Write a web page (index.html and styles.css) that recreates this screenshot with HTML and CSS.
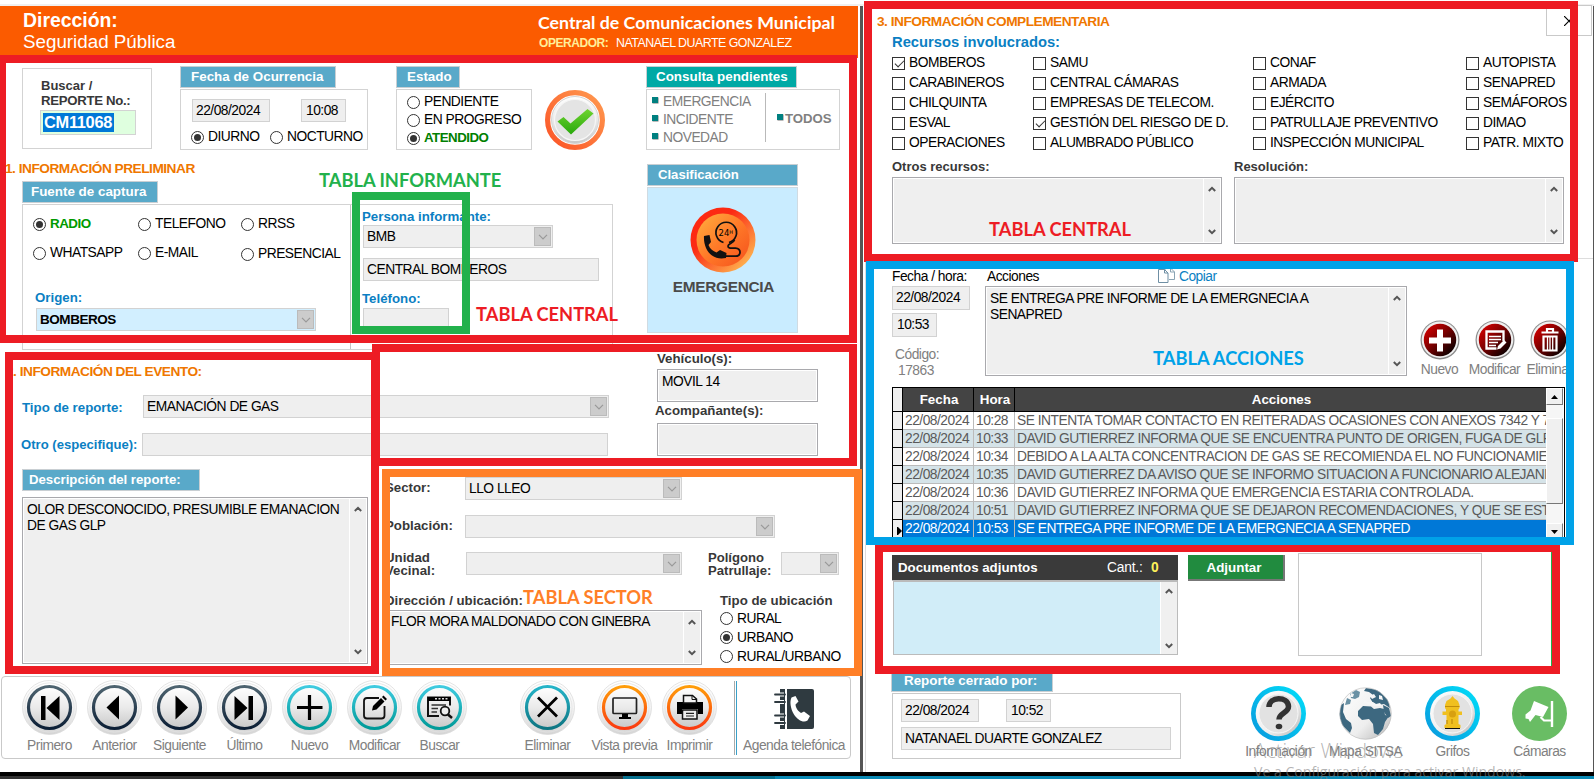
FILE: index.html
```html
<!DOCTYPE html>
<html lang="es">
<head>
<meta charset="utf-8">
<title>Central de Comunicaciones Municipal</title>
<link rel="stylesheet" href="styles.css">
</head>
<body>
<svg class="defs" width="0" height="0" aria-hidden="true">
  <defs>
    <linearGradient id="silver" x1="0" y1="0" x2="0" y2="1"><stop offset="0" stop-color="#ffffff"/><stop offset=".5" stop-color="#eaeaea"/><stop offset="1" stop-color="#c8c8c8"/></linearGradient>
    <linearGradient id="rim" x1="0" y1="0" x2="0" y2="1"><stop offset="0" stop-color="#ffffff"/><stop offset=".5" stop-color="#f4f4f4"/><stop offset="1" stop-color="#d4d4d4"/></linearGradient>
    <linearGradient id="navy" x1="0" y1="0" x2="0" y2="1"><stop offset="0" stop-color="#4e6470"/><stop offset="1" stop-color="#0c1f36"/></linearGradient>
    <linearGradient id="teal" x1="0" y1="0" x2="0" y2="1"><stop offset="0" stop-color="#3fcbe0"/><stop offset="1" stop-color="#009a98"/></linearGradient>
    <linearGradient id="steel" x1="0" y1="0" x2="0" y2="1"><stop offset="0" stop-color="#25b4c8"/><stop offset="1" stop-color="#0d7582"/></linearGradient>
    <linearGradient id="fire" x1="0" y1="0" x2="0" y2="1"><stop offset="0" stop-color="#ff9d0a"/><stop offset="1" stop-color="#fb3a10"/></linearGradient>
    <linearGradient id="coral" x1="1" y1="0" x2="0" y2="1"><stop offset="0" stop-color="#ff9a50"/><stop offset="1" stop-color="#fb5326"/></linearGradient>
    <linearGradient id="leaf" x1="0" y1="0" x2="0" y2="1"><stop offset="0" stop-color="#6fd430"/><stop offset="1" stop-color="#28a80c"/></linearGradient>
    <linearGradient id="cyan" x1="1" y1="0" x2="0" y2="1"><stop offset="0" stop-color="#00e0fa"/><stop offset="1" stop-color="#0a96dc"/></linearGradient>
    <linearGradient id="blood" x1="0" y1="0" x2="1" y2="1"><stop offset="0" stop-color="#e80000"/><stop offset=".4" stop-color="#8a0000"/><stop offset=".85" stop-color="#120000"/></linearGradient>
    <linearGradient id="lava" x1="0" y1="0" x2="1" y2="1"><stop offset="0" stop-color="#ff2a10"/><stop offset=".35" stop-color="#fb2a14"/><stop offset="1" stop-color="#ffd25c"/></linearGradient>
    <linearGradient id="lava2" x1="0" y1="0" x2="1" y2="1"><stop offset="0" stop-color="#ffb040"/><stop offset=".5" stop-color="#ff7a28"/><stop offset="1" stop-color="#f4501c"/></linearGradient>
    <linearGradient id="globe" x1="0" y1="0" x2="1" y2="1"><stop offset="0" stop-color="#ffffff"/><stop offset=".6" stop-color="#eeeeee"/><stop offset="1" stop-color="#b4b4b4"/></linearGradient>
    <clipPath id="globeclip"><circle cx="27.5" cy="27.5" r="26"/></clipPath>
    <symbol id="plate" viewBox="0 0 55 55"><circle cx="27.5" cy="27.5" r="27" fill="url(#rim)" stroke="#d8d8d8" stroke-width=".7"/><circle cx="27.5" cy="27.5" r="24.6" fill="none" stroke="#e2e2e2" stroke-width=".8"/></symbol>
    <symbol id="down" viewBox="0 0 10 6"><path d="M1 .8l4 4 4-4" fill="none" stroke="currentColor" stroke-width="1.2"/></symbol>
    <symbol id="chev-up" viewBox="0 0 8 6"><path d="M.8 5L4 1.9 7.2 5" fill="none" stroke="#555" stroke-width="2"/></symbol>
    <symbol id="chev-dn" viewBox="0 0 8 6"><path d="M.8 1L4 4.1 7.2 1" fill="none" stroke="#555" stroke-width="2"/></symbol>
  </defs>
</svg>

<div class="screen">
  <div class="topline"></div>
  <div class="panels">

    <main class="left">
      <header class="banner">
        <div class="dept"><b>Dirección:</b><span>Seguridad Pública</span></div>
        <div class="office"><b>Central de Comunicaciones Municipal</b><p><strong>OPERADOR:</strong><span>NATANAEL DUARTE GONZALEZ</span></p></div>
      </header>

      <section class="summary">
        <div class="search"><span class="lbl">Buscar /</span><span class="lbl caps">REPORTE No.:</span><div class="search-in"><mark>CM11068</mark></div></div>
        <div class="group g-fecha">
          <div class="tab">Fecha de Ocurrencia</div>
          <div class="box">
            <div class="row stamps"><div class="in date">22/08/2024</div><div class="in time">10:08</div></div>
            <div class="row shifts"><label class="opt"><i class="radio on"></i>DIURNO</label><label class="opt"><i class="radio"></i>NOCTURNO</label></div>
          </div>
        </div>
        <div class="group g-estado">
          <div class="tab">Estado</div>
          <div class="box"><label class="opt"><i class="radio"></i>PENDIENTE</label><label class="opt"><i class="radio"></i>EN PROGRESO</label><label class="opt done"><i class="radio on"></i>ATENDIDO</label></div>
        </div>
        <svg class="check" viewBox="0 0 60 60"><circle cx="30" cy="30" r="27.4" fill="#fff" stroke="url(#coral)" stroke-width="5.2"/><circle cx="30" cy="30" r="23.5" fill="url(#silver)" stroke="#d5d5d5" stroke-width="1"/><circle cx="30" cy="30" r="20.5" fill="#e4e4e4" stroke="#f6f6f6" stroke-width="1.2"/><path d="M12.500 31.500l6-4.500 7 6.500L42.500 19l6 4.500L26 44.500z" fill="url(#leaf)"/></svg>
        <div class="group g-pend">
          <div class="tab aqua">Consulta pendientes</div>
          <div class="box row">
            <ul class="bullets"><li>EMERGENCIA</li><li>INCIDENTE</li><li>NOVEDAD</li></ul>
            <div class="todos"><span>TODOS</span></div>
          </div>
        </div>
      </section>

      <section class="prelim">
        <div class="prelim-main">
          <h2>1. INFORMACIÓN PRELIMINAR</h2>
          <div class="tab t-fuente">Fuente de captura</div>
          <div class="capture">
            <div class="source">
              <div class="sources">
                <label class="opt green"><i class="radio on"></i>RADIO</label><label class="opt"><i class="radio"></i>TELEFONO</label><label class="opt"><i class="radio"></i>RRSS</label>
                <label class="opt"><i class="radio"></i>WHATSAPP</label><label class="opt"><i class="radio"></i>E-MAIL</label><label class="opt low"><i class="radio"></i>PRESENCIAL</label>
              </div>
              <span class="lbl blue">Origen:</span>
              <div class="in combo sky"><b>BOMBEROS</b><i class="drop"><svg><use href="#down"/></svg></i></div>
            </div>
            <div class="informer">
              <span class="lbl blue">Persona informante:</span>
              <div class="in combo w190">BMB<i class="drop"><svg><use href="#down"/></svg></i></div>
              <div class="in central">CENTRAL BOMBEROS</div>
              <span class="lbl blue tel">Teléfono:</span>
              <div class="in w86"></div>
            </div>
          </div>
        </div>
        <div class="classif">
          <div class="tab">Clasificación</div>
          <div class="classbox">
            <svg viewBox="0 0 66 66"><circle cx="33" cy="33" r="32.500" fill="url(#lava)"/><circle cx="33" cy="33" r="26.500" fill="url(#lava2)"/>
              <path d="M39 35.500a10.300 10.300 0 1 0-5.500 0" fill="none" stroke="#111" stroke-width="1.700"/>
              <path d="M44.500 33c-1 3-6.500 3.500-6.500 6 0 3 3.500 2 7.500 2.200 6 .3 6 8 0 8H35" fill="none" stroke="#111" stroke-width="1.800"/>
              <path d="M14 29l5.500-1 1.500 7-2.500 3c1.500 4 4.500 6 8 7.500l3.500-2.500 6.500 3-.5 5c-5 1-10 .5-14-2.500C16.500 44.500 13.500 37 14 29z" fill="#111"/>
              <text class="h24" x="28.500" y="29">24<tspan dy="-2" font-size="5">H</tspan></text></svg>
            <strong>EMERGENCIA</strong>
          </div>
        </div>
      </section>

      <section class="event">
        <div class="event-main">
          <h2>2. INFORMACIÓN DEL EVENTO:</h2>
          <div class="row f-tipo"><span class="lbl blue">Tipo de reporte:</span><div class="in combo">EMANACIÓN DE GAS<i class="drop"><svg><use href="#down"/></svg></i></div></div>
          <div class="row f-otro"><span class="lbl blue">Otro (especifique):</span><div class="in"></div></div>
        </div>
        <div class="vehicles">
          <span class="lbl">Vehículo(s):</span><div class="area">MOVIL 14</div>
          <span class="lbl acomp">Acompañante(s):</span><div class="area"></div>
        </div>
      </section>

      <section class="place">
        <div class="descr">
          <div class="tab">Descripción del reporte:</div>
          <div class="area scroll"><p>OLOR DESCONOCIDO, PRESUMIBLE EMANACION<br>DE GAS GLP</p><div class="bar"><svg><use href="#chev-up"/></svg><svg><use href="#chev-dn"/></svg></div></div>
        </div>
        <div class="sector">
          <div class="row s1"><span class="lbl">Sector:</span><div class="in combo">LLO LLEO<i class="drop"><svg><use href="#down"/></svg></i></div></div>
          <div class="row s2"><span class="lbl">Población:</span><div class="in combo"><i class="drop"><svg><use href="#down"/></svg></i></div></div>
          <div class="row s3"><span class="lbl two">Unidad<br>Vecinal:</span><div class="in combo"><i class="drop"><svg><use href="#down"/></svg></i></div><span class="lbl two poly">Polígono<br>Patrullaje:</span><div class="in combo mini"><i class="drop"><svg><use href="#down"/></svg></i></div></div>
          <div class="row s4">
            <div class="address"><span class="lbl">Dirección / ubicación:</span><div class="area scroll"><p>FLOR MORA MALDONADO CON GINEBRA</p><div class="bar"><svg><use href="#chev-up"/></svg><svg><use href="#chev-dn"/></svg></div></div></div>
            <div class="kind"><span class="lbl">Tipo de ubicación</span><label class="opt"><i class="radio"></i>RURAL</label><label class="opt"><i class="radio on"></i>URBANO</label><label class="opt"><i class="radio"></i>RURAL/URBANO</label></div>
          </div>
        </div>
      </section>

      <nav class="toolbar">
        <a class="tool"><svg viewBox="0 0 55 55"><use href="#plate"/><circle cx="27.500" cy="27.500" r="21" fill="url(#silver)" stroke="url(#navy)" stroke-width="3.200"/><path d="M19 16h4.500v24H19zM37.500 16v24L24.500 28z"/></svg>Primero</a>
        <a class="tool"><svg viewBox="0 0 55 55"><use href="#plate"/><circle cx="27.500" cy="27.500" r="21" fill="url(#silver)" stroke="url(#navy)" stroke-width="3.200"/><path d="M32 15.500v24L19.500 27.500z"/></svg>Anterior</a>
        <a class="tool"><svg viewBox="0 0 55 55"><use href="#plate"/><circle cx="27.500" cy="27.500" r="21" fill="url(#silver)" stroke="url(#navy)" stroke-width="3.200"/><path d="M23.500 15.500v24L36 27.500z"/></svg>Siguiente</a>
        <a class="tool"><svg viewBox="0 0 55 55"><use href="#plate"/><circle cx="27.500" cy="27.500" r="21" fill="url(#silver)" stroke="url(#navy)" stroke-width="3.200"/><path d="M36 16h-4.500v24H36zM17.500 16v24L30.500 28z"/></svg>Último</a>
        <a class="tool"><svg viewBox="0 0 55 55"><use href="#plate"/><circle cx="27.500" cy="27.500" r="21" fill="url(#silver)" stroke="url(#teal)" stroke-width="3.200"/><path d="M27.500 15v25M15 27.500h25.500" stroke="#000" stroke-width="3.200"/></svg>Nuevo</a>
        <a class="tool"><svg viewBox="0 0 55 55"><use href="#plate"/><circle cx="27.500" cy="27.500" r="21" fill="url(#silver)" stroke="url(#teal)" stroke-width="3.200"/><path d="M32 18H20q-3 0-3 3v14.500q0 3 3 3h14.500q3 0 3-3V26" fill="none" stroke="#111" stroke-width="1.800"/><path d="M25 30.500l1-4.500 8-8 3.500 3.500-8 8zM35 17l1.500-1.500L40 19l-1.500 1.500z"/></svg>Modificar</a>
        <a class="tool"><svg viewBox="0 0 55 55"><use href="#plate"/><circle cx="27.500" cy="27.500" r="21" fill="url(#silver)" stroke="url(#teal)" stroke-width="3.200"/><path d="M27 36H16V17.500h22v8M16 20h22" fill="none" stroke="#111" stroke-width="2"/><path d="M16 17h22v4H16z"/><path d="M19.500 25H34M19.500 28.500H26M19.500 32H25" stroke="#333" stroke-width="1.500"/><path d="M23 18.800h14" stroke="#ddd" stroke-width="1.400" stroke-dasharray="2 1.500"/><circle cx="33" cy="31" r="4.300" fill="#eee" stroke="#111" stroke-width="1.800"/><path d="M36 34.500l4 3.500" stroke="#111" stroke-width="2.500"/></svg>Buscar</a>
        <a class="tool t-elim"><svg viewBox="0 0 55 55"><use href="#plate"/><circle cx="27.500" cy="27.500" r="21" fill="url(#silver)" stroke="url(#steel)" stroke-width="3.200"/><path d="M18 17.500l19 19M37 17.500l-19 19" stroke="#000" stroke-width="2.800"/></svg>Eliminar</a>
        <a class="tool t-vista"><svg viewBox="0 0 55 55"><use href="#plate"/><circle cx="27.500" cy="27.500" r="21" fill="url(#silver)" stroke="url(#fire)" stroke-width="3.200"/><rect x="16" y="18" width="23.500" height="15.500" rx="1" fill="none" stroke="#222" stroke-width="1.700"/><path d="M25 34h6v3h3v2H22v-2h3z"/></svg>Vista previa</a>
        <a class="tool"><svg viewBox="0 0 55 55"><use href="#plate"/><circle cx="27.500" cy="27.500" r="21" fill="url(#silver)" stroke="url(#fire)" stroke-width="3.200"/><path d="M15 22h26v12h-5v-5H20v5h-5z"/><path d="M21.500 23v-7.500h9l4 3.500v4z" fill="#f4f4f4" stroke="#111" stroke-width="1.500"/><path d="M30 15.500v4h4.500" fill="none" stroke="#111"/><rect x="20.500" y="30" width="14.500" height="9" fill="#eee" stroke="#111" stroke-width="1.500"/><path d="M24 33.300h8M24 36h8" stroke="#222" stroke-width="1.200"/></svg>Imprimir</a>
        <div class="agenda"><svg viewBox="0 0 40 40"><path d="M13 0h25q2 0 2 2v36q0 2-2 2H13z" fill="#2f3a40"/><path d="M6 0h5v40H6z" fill="#2f3a40"/><path d="M1 5.500h9M1 13h9M1 26.500h9M1 34h9" stroke="#fff" stroke-width="4"/><path d="M1 5.500h10M1 13h10M1 26.500h10M1 34h10" stroke="#2f3a40" stroke-width="1.800" stroke-linecap="round"/><path d="M17.500 8.500l4-1.500 3 5.500-3 3c.3 4 3 7 5.500 8.500l3-1.500 6 4.500-2.500 4.500c-4 3-10-.5-13.500-6-3.500-6-4.500-13-2.500-17z" fill="#fff"/></svg>Agenda telefónica</div>
      </nav>
    </main>

    <div class="divider"></div>

    <aside class="right">
      <div class="head3">
        <div><h2>3. INFORMACIÓN COMPLEMENTARIA</h2><h3>Recursos involucrados:</h3></div>
        <div class="close"><svg viewBox="0 0 10 10"><path d="M0 0l10 10M10 0L0 10" stroke="#000" stroke-width="1.200"/></svg></div>
      </div>
      <div class="resources">
        <div><label class="opt"><i class="cb on"></i>BOMBEROS</label><label class="opt"><i class="cb"></i>CARABINEROS</label><label class="opt"><i class="cb"></i>CHILQUINTA</label><label class="opt"><i class="cb"></i>ESVAL</label><label class="opt"><i class="cb"></i>OPERACIONES</label></div>
        <div><label class="opt"><i class="cb"></i>SAMU</label><label class="opt"><i class="cb"></i>CENTRAL CÁMARAS</label><label class="opt"><i class="cb"></i>EMPRESAS DE TELECOM.</label><label class="opt"><i class="cb on"></i>GESTIÓN DEL RIESGO DE D.</label><label class="opt"><i class="cb"></i>ALUMBRADO PÚBLICO</label></div>
        <div><label class="opt"><i class="cb"></i>CONAF</label><label class="opt"><i class="cb"></i>ARMADA</label><label class="opt"><i class="cb"></i>EJÉRCITO</label><label class="opt"><i class="cb"></i>PATRULLAJE PREVENTIVO</label><label class="opt"><i class="cb"></i>INSPECCIÓN MUNICIPAL</label></div>
        <div><label class="opt"><i class="cb"></i>AUTOPISTA</label><label class="opt"><i class="cb"></i>SENAPRED</label><label class="opt"><i class="cb"></i>SEMÁFOROS</label><label class="opt"><i class="cb"></i>DIMAO</label><label class="opt"><i class="cb"></i>PATR. MIXTO</label></div>
      </div>
      <div class="row notes">
        <div><span class="lbl">Otros recursos:</span><div class="area scroll"><p></p><div class="bar"><svg><use href="#chev-up"/></svg><svg><use href="#chev-dn"/></svg></div></div></div>
        <div><span class="lbl">Resolución:</span><div class="area scroll"><p></p><div class="bar"><svg><use href="#chev-up"/></svg><svg><use href="#chev-dn"/></svg></div></div></div>
      </div>
      <div class="rule"></div>

      <div class="row actions">
        <div class="when"><span class="plain">Fecha / hora:</span><div class="in date">22/08/2024</div><div class="in time">10:53</div><span class="code">Código:<br><em>17863</em></span></div>
        <div class="what">
          <div class="row what-h"><span class="plain">Acciones</span><svg viewBox="0 0 17 16"><path d="M7 4V1.500h6l3.500 3.500v7.500H11M12.500 1.500V5h4" fill="none" stroke="#8aa4b4"/><path d="M.5 2.500h6L10 6v9.500H.5z" fill="#fff" stroke="#6f8fa4"/><path d="M6.500 2.500V6H10" fill="none" stroke="#6f8fa4"/></svg><span class="copy">Copiar</span></div>
          <div class="area scroll"><p>SE ENTREGA PRE INFORME DE LA EMERGNECIA A<br>SENAPRED</p><div class="bar"><svg><use href="#chev-up"/></svg><svg><use href="#chev-dn"/></svg></div></div>
        </div>
        <div class="row acts">
          <a><svg viewBox="0 0 40 40"><circle cx="20" cy="20" r="19.500" fill="#8a8a8a"/><circle cx="20" cy="19.700" r="18.300" fill="#efefef"/><circle cx="20" cy="20" r="16.200" fill="url(#blood)"/><path d="M20 9.500v22M9 20.500h22" stroke="#fff" stroke-width="6"/></svg>Nuevo</a>
          <a><svg viewBox="0 0 40 40"><circle cx="20" cy="20" r="19.500" fill="#8a8a8a"/><circle cx="20" cy="19.700" r="18.300" fill="#efefef"/><circle cx="20" cy="20" r="16.200" fill="url(#blood)"/><path d="M28.500 21V11.500h-17v17h10" fill="none" stroke="#fff" stroke-width="2.300"/><path d="M14 16.500h12M14 19.500h12M14 22.500h9M14 25.500h7" stroke="#fff" stroke-width="1.300"/><path d="M22 29.500l1-3.500 6-6 2.500 2.500-6 6z" fill="#fff"/></svg>Modificar</a>
          <a><svg viewBox="0 0 40 40"><circle cx="20" cy="20" r="19.500" fill="#8a8a8a"/><circle cx="20" cy="19.700" r="18.300" fill="#efefef"/><circle cx="20" cy="20" r="16.200" fill="url(#blood)"/><path d="M11.500 12.500h17M17 11.500V9h6v2.500" fill="none" stroke="#fff" stroke-width="2.200"/><path d="M13.500 16.500h13v14h-13z" fill="none" stroke="#fff" stroke-width="2.200"/><path d="M17.500 17v13M20 17v13M22.700 17v13" stroke="#fff" stroke-width="1.300"/></svg>Eliminar</a>
        </div>
      </div>

      <div class="log">
        <div class="grid">
          <div class="tr th"><i></i><span>Fecha</span><span>Hora</span><span>Acciones</span></div>
          <div class="tr"><i></i><span>22/08/2024</span><span>10:28</span><span>SE INTENTA TOMAR CONTACTO EN REITERADAS OCASIONES CON ANEXOS 7342 Y 7</span></div>
          <div class="tr alt"><i></i><span>22/08/2024</span><span>10:33</span><span>DAVID GUTIERREZ INFORMA QUE SE ENCUENTRA PUNTO DE ORIGEN, FUGA DE GLP</span></div>
          <div class="tr"><i></i><span>22/08/2024</span><span>10:34</span><span>DEBIDO A LA ALTA CONCENTRACION DE GAS SE RECOMIENDA EL NO FUNCIONAMIE</span></div>
          <div class="tr alt"><i></i><span>22/08/2024</span><span>10:35</span><span>DAVID GUTIERREZ DA AVISO QUE SE INFORMO SITUACION A FUNCIONARIO ALEJAND</span></div>
          <div class="tr"><i></i><span>22/08/2024</span><span>10:36</span><span>DAVID GUTIERREZ INFORMA QUE EMERGENCIA ESTARIA CONTROLADA.</span></div>
          <div class="tr alt"><i></i><span>22/08/2024</span><span>10:51</span><span>DAVID GUTIERREZ INFORMA QUE SE DEJARON RECOMENDACIONES, Y QUE SE ESTA</span></div>
          <div class="tr sel"><i><svg viewBox="0 0 5 8"><path d="M0 0h1l4 4-4 4H0z"/></svg></i><span>22/08/2024</span><span>10:53</span><span>SE ENTREGA PRE INFORME DE LA EMERGNECIA A SENAPRED</span></div>
        </div>
        <div class="vbar"><b><svg viewBox="0 0 7 4"><path d="M0 4h7L3.500 0z"/></svg></b><b class="thumb"></b><b><svg viewBox="0 0 7 4"><path d="M0 0h7L3.500 4z"/></svg></b></div>
      </div>

      <div class="row docs">
        <div class="doclist"><div class="dochead"><b>Documentos adjuntos</b><span>Cant.:</span><em>0</em></div><div class="docbody"><div class="bar"><svg><use href="#chev-up"/></svg><svg><use href="#chev-dn"/></svg></div></div></div>
        <div class="attach">Adjuntar</div>
        <div class="preview"></div>
      </div>

      <div class="row closing">
        <div class="closed">
          <div class="tab">Reporte cerrado por:</div>
          <div class="closedbox"><div class="row"><div class="in date">22/08/2024</div><div class="in time">10:52</div></div><div class="in">NATANAEL DUARTE GONZALEZ</div></div>
        </div>
        <div class="links">
          <a><svg viewBox="0 0 55 55"><circle cx="27.500" cy="27.500" r="27.500" fill="url(#cyan)"/><circle cx="27.500" cy="27.500" r="22.800" fill="url(#globe)"/><circle cx="27.500" cy="27.500" r="19.500" fill="#e2e2e2" stroke="#f8f8f8"/><path d="M18 21c0-11 19-11 19.500-.5 0 6.500-9.500 6.500-9.500 13" fill="none" stroke="#333" stroke-width="5.500"/><ellipse cx="28" cy="40.500" rx="3.300" ry="2.800" fill="#333"/></svg>Información</a>
          <a><svg viewBox="0 0 55 55"><circle cx="27.500" cy="27.500" r="26" fill="url(#globe)"/>
            <g clip-path="url(#globeclip)" fill="#3d6880"><path d="M12 8l6-4 4 2-1 5-4 2-4-1zM9 12l4 2-1 4-5 1z" fill="#6a91a4"/><path d="M3 19l3-2-1 9 3 7 5 4 1 5-2 5-8-8-3-10z"/><path d="M28 2l12 2 10 10 2 8-6-4-6 1-5-2-3-5 3-3-4-3-5-1z"/><path d="M20 25l5-5 8 .5 3 2.500 6-1 4 1 1 6 4 1-4 6-2 7-5 6-4-2-1-9-4-5-7 1-4-4z"/><path d="M45 19l6 3 2 8-3 2-4-6z"/></g>
            <path d="M32 10l4-2 2 3-4 2zM41 9l3 1 1 4-4-1zM26 14l4 2 5 0 3 2 4-1 2 3-6 0-6-1-6-2zM13 7l3 1-1 3-3 0z" fill="#f6f6f6"/><circle cx="27.500" cy="27.500" r="25.700" fill="none" stroke="#bbb" stroke-width=".6"/></svg>Mapa SITSA</a>
          <a><svg viewBox="0 0 55 55"><circle cx="27.500" cy="27.500" r="27.500" fill="url(#cyan)"/><circle cx="27.500" cy="27.500" r="22.500" fill="url(#globe)"/><circle cx="27.500" cy="27.500" r="19.500" fill="#e2e2e2" stroke="#f8f8f8"/><path d="M20 40h15v3H20z" fill="#111"/><path d="M27.500 10l2 2.500 3.500 2.500 1.500 4v3l-1 1.500v2h3.500v3.500h-3.500v9l2 1v3h-16v-3l2-1v-9H17.500v-3.500H21v-2L20 22v-3l1.500-4 4-2.500z" fill="#f0c020"/><circle cx="27.500" cy="28" r="3.500" fill="#d8a010"/><path d="M20 20.500h14.500M22 34v4M27 33v5" stroke="#c08c0c" stroke-width="1.200"/></svg>Grifos</a>
          <a><svg viewBox="0 0 55 55"><circle cx="27.500" cy="27.500" r="27.500" fill="#69bd64"/><path d="M40 15v26" stroke="#fff" stroke-width="2.400"/><path d="M39.500 34.500h-7.500l-3.500-3.500" fill="none" stroke="#fff" stroke-width="2.200"/><path d="M22 15L36.500 21 31 31l-7.500-2-5.500 7-1.500-3-3-.5v-4l5-4z" fill="#fff"/></svg>Cámaras</a>
        </div>
      </div>
    </aside>
  </div>
  <footer class="taskbar"><i></i><i></i><i></i></footer>

  <div class="frame f1"></div>
  <div class="frame f2"></div>
  <div class="frame f3"></div>
  <div class="frame f4 green-f"></div>
  <div class="frame f5 orange-f"></div>
  <div class="frame f6"></div>
  <div class="frame f7 blue-f"></div>
  <div class="frame f8"></div>
  <div class="note n1">TABLA INFORMANTE</div>
  <div class="note n2">TABLA CENTRAL</div>
  <div class="note n3">TABLA SECTOR</div>
  <div class="note n4">TABLA CENTRAL</div>
  <div class="note n5">TABLA ACCIONES</div>
  <div class="activate"><b>Activar Windows</b><span>Ve a Configuración para activar Windows.</span></div>
</div>
</body>
</html>
```
FILE: styles.css
```css
* { box-sizing: border-box; }
body { margin: 0; background: #fff; font: 13.8px/16px "Liberation Sans", Arial, sans-serif; letter-spacing: -.5px; color: #000; overflow: hidden; }
h2, h3, p, ul { margin: 0; padding: 0; }
em, i { font-style: normal; }
.defs { position: absolute; }
.screen { position: relative; width: 1594px; height: 779px; overflow: hidden; white-space: nowrap; display: flex; flex-direction: column; }
.topline { height: 6px; border-bottom: 2px solid #f0f0f0; flex: none; }
.panels { display: flex; height: 766px; flex: none; }
.row { display: flex; align-items: flex-start; }
.left { width: 860px; flex: none; }
.divider { width: 6px; background: #fff; border-left: 3px solid #555; border-right: 1px solid #dcdcdc; flex: none; }
.right { width: 728px; border-right: 1px solid #555; flex: none; }

/* shared controls */
h2 { font-size: 13.7px; line-height: 16px; color: #ef7700; }
.lbl { display: block; font-weight: bold; font-size: 13.27px; line-height: 16px; letter-spacing: 0; color: #383838; }
.lbl.blue { color: #0b7fc3; }
.lbl.two { line-height: 13px; }
.tab { height: 22px; line-height: 20px; padding-left: 10px; border: 1px solid #c9cfd3; background: #59a9c9; color: #fff; font-weight: bold; font-size: 13.4px; letter-spacing: 0; }
.tab.aqua { background: #00a9a5; }
.in { height: 23px; line-height: 21px; padding-left: 3px; border: 1px solid #d2d2d2; background: #efefef; overflow: hidden; flex: none; }
.date { width: 78px; }
.time { width: 45px; padding-left: 4px; }
.combo { display: flex; justify-content: space-between; padding-right: 1px; }
.sky { background: #d2efff; }
.drop { width: 17px; height: 19px; margin: 1px 0 0 auto; border: 1px solid #bbb; background: #ccc; color: #999; display: flex; align-items: center; justify-content: center; }
.drop svg { width: 10px; height: 6px; }
.area { border: 1px solid #a9a9ad; background: #efefef; box-shadow: inset 0 0 0 1px #fff; padding: 4px 4px; line-height: 16px; }
.scroll { display: flex; justify-content: space-between; padding: 0 2px 0 4px; }
.scroll p { padding-top: 4px; }
.bar { width: 16px; margin: 1px 0; padding: 7px 0 7px; border-left: 1px solid #fff; display: flex; flex-direction: column; align-items: center; justify-content: space-between; }
.bar svg { width: 8px; height: 6px; }
.opt { display: flex; align-items: center; gap: 4px; height: 18px; line-height: 18px; }
.radio { width: 13px; height: 13px; border: 1px solid #333; border-radius: 50%; background: #fff; flex: none; display: flex; }
.radio.on::after { content: ""; width: 7px; height: 7px; margin: 2px; border-radius: 50%; background: #333; }
.cb { width: 13px; height: 13px; border: 1px solid #333; background: #fff; flex: none; display: flex; }
.cb.on::after { content: ""; width: 8px; height: 4px; margin: 2px 0 0 2px; border-left: 1px solid #333; border-bottom: 1px solid #333; transform: rotate(-45deg); }

/* banner */
.banner { width: 858px; height: 52px; background: #fb5b00; color: #fff; display: flex; justify-content: space-between; letter-spacing: 0; }
.dept { padding: 3px 0 0 23px; display: flex; flex-direction: column; font-size: 18.8px; line-height: 22px; }
.dept b { font-size: 19.4px; }
.office { width: 320px; padding-top: 5px; }
.office > b { font: bold 17.75px/22px Lato, sans-serif; }
.office p { display: flex; gap: 9px; padding-left: 1px; margin-top: 2px; font-size: 12.4px; letter-spacing: -.5px; }
.office strong { color: #ffee9a; font-size: 12px; letter-spacing: -.45px; width: 68px; }

/* summary row */
.summary { height: 102px; padding-top: 8px; display: flex; align-items: flex-start; }
.search { width: 130px; height: 81px; margin: 2px 0 0 22px; padding: 9px 0 0 18px; border: 1px solid #d3d3d3; }
.search .lbl { line-height: 15px; font-size: 13px; }
.search .caps { font-size: 13.2px; letter-spacing: -.3px; }
.search-in { width: 96px; height: 25px; margin-left: -1px; margin-top: 2px; padding: 2px; border: 1px solid #d3d3d3; background: #dfffdf; }
mark { display: block; width: 71px; height: 19px; line-height: 19px; padding-left: 1px; background: #0078d7; color: #fff; font-weight: bold; font-size: 16.4px; letter-spacing: -.3px; }
.box { height: 61px; margin-top: 1px; border: 1px solid #d3d3d3; }
.g-fecha { width: 188px; margin-left: 28px; }
.g-fecha .tab { width: 156px; }
.stamps { gap: 31px; padding: 9px 0 0 11px; }
.shifts { gap: 7px; padding: 6px 0 0 10px; }
.shifts .opt:first-child { width: 72px; }
.g-estado { width: 136px; margin-left: 28px; }
.g-estado .tab { width: 64px; }
.g-estado .box { padding: 3px 0 0 10px; }
.done { color: #008000; font-weight: bold; font-size: 13.3px; }
.check { width: 60px; height: 60px; margin: 24px 0 0 13px; }
.g-pend { width: 194px; margin-left: 41px; }
.g-pend .tab { width: 151px; padding-left: 9px; }
.bullets { width: 119px; height: 49px; margin: 3px 0 4px; padding-left: 5px; border-right: 1px solid #b9b9b9; list-style: none; color: #808080; line-height: 18px; }
.bullets li::before, .todos span::before { content: ""; display: inline-block; width: 6px; height: 6px; margin-right: 5px; background: #008080; box-shadow: .5px .5px 0 #777; vertical-align: 3px; }
.todos { padding: 21px 0 0 11px; color: #808080; font-weight: bold; letter-spacing: 0; font-size: 13.2px; }
.todos span::before { margin-right: 2px; }

/* preliminary information */
.prelim { height: 192px; display: flex; align-items: flex-start; }
.prelim-main { width: 647px; padding-top: 1px; }
.prelim h2 { padding-left: 5px; }
.t-fuente { width: 136px; margin: 4px 0 1px 22px; padding-left: 8px; }
.capture { width: 591px; height: 146px; margin-left: 22px; border: 1px solid #d3d3d3; display: flex; }
.source { width: 328px; border-right: 1px solid #c4c4c4; padding: 10px 0 0 13px; }
.sources { display: grid; grid-template-columns: 105px 103px 90px; grid-template-rows: 18px 18px; row-gap: 11px; margin-left: -3px; }
.sources .low { margin-top: 1px; }
.green { color: #009a00; font-weight: bold; font-size: 13.4px; }
.source .lbl { margin-top: 28px; margin-left: -1px; }
.source .in { width: 280px; margin-top: 2px; }
.source .in b { font-size: 13.5px; letter-spacing: -.45px; }
.informer { padding: 4px 0 0 12px; height: 130px; overflow: hidden; }
.informer .lbl { margin-left: -1px; }
.w190 { width: 190px; }
.central { width: 236px; margin-top: 10px; }
.tel { margin-top: 10px; }
.w86 { width: 86px; margin-top: 1px; }
.classif { width: 151px; padding-top: 4px; }
.classif .tab { font-size: 13.1px; }
.classbox { height: 146px; margin-top: 1px; background: #c9ecff; border: 1px solid #d0dbe2; display: flex; flex-direction: column; align-items: center; padding-top: 19px; }
.classbox svg { width: 66px; height: 66px; }
.classbox strong { margin: 5px 0 0 2px; font-size: 15.4px; letter-spacing: -.3px; line-height: 18px; color: #4a4a4a; }
.h24 { font: 8.500px "DejaVu Sans", sans-serif; letter-spacing: 0; }

/* event */
.event { height: 114px; display: flex; align-items: flex-start; }
.event-main { width: 655px; padding-top: 12px; }
.event h2 { padding-left: 6px; }
.f-tipo { padding: 15px 0 0 22px; }
.f-tipo .lbl { width: 121px; margin-top: 5px; }
.f-tipo .in { width: 466px; }
.f-otro { padding: 15px 0 0 21px; }
.f-otro .lbl { width: 121px; margin-top: 4px; font-size: 13.1px; }
.f-otro .in { width: 466px; }
.vehicles .lbl { margin-left: 2px; margin-top: -1px; }
.vehicles .lbl.acomp { margin: 1px 0 0; }
.vehicles .area { width: 161px; height: 33px; margin: 2px 0 0 2px; }
.vehicles .acomp + .area { margin-top: 4px; }

/* description and sector */
.place { height: 210px; display: flex; align-items: flex-start; }
.descr { width: 385px; padding: 3px 0 0 22px; }
.descr .tab { width: 178px; padding-left: 6px; font-size: 13.2px; }
.descr .area { width: 346px; height: 167px; margin-top: 6px; }
.sector { padding-top: 11px; }
.s1 .lbl, .s2 .lbl { width: 80px; margin-top: 3px; }
.s1 .in { width: 217px; }
.s2 { margin-top: 15px; }
.s2 .in { width: 310px; }
.s3 { margin-top: 14px; }
.s3 .two { width: 81px; margin-top: -1px; }
.s3 .in { width: 216px; }
.s3 .poly { width: 73px; margin-left: 26px; font-size: 13.1px; }
.s3 .mini { width: 58px; }
.s4 { margin-top: 16px; }
.address { width: 317px; }
.address .area { height: 55px; margin-top: 1px; padding-left: 5px; }
.address p { padding-top: 3px; }
.kind { margin-left: 18px; }
.kind .opt { height: 19px; }

/* toolbar */
.toolbar { width: 850px; height: 83px; margin-left: 1px; border: 1px solid #c9c9c9; border-radius: 4px; padding: 3px 0 0 15px; display: flex; align-items: flex-start; color: #808080; }
.tool { width: 65px; display: flex; flex-direction: column; align-items: center; }
.tool svg { width: 55px; height: 55px; margin-bottom: 3px; }
.t-elim { margin-left: 43px; }
.t-vista { margin-left: 12px; }
.agenda { height: 74px; margin: 1px 0 0 12px; padding-left: 8px; border-left: 1px solid #aaa; box-shadow: inset 1px 0 0 #fff, inset 2px 0 0 #3aa0c8; display: flex; flex-direction: column; align-items: center; }
.agenda svg { width: 40px; height: 40px; margin: 8px 0 9px; }

/* complementary information */
.head3 { height: 48px; padding: 8px 1px 0 11px; display: flex; justify-content: space-between; align-items: flex-start; }
.head3 h3 { font-size: 14.75px; letter-spacing: 0; line-height: 18px; color: #0b7fc3; margin: 3px 0 0 15px; }
.close { width: 46px; height: 31px; margin-top: -9px; border: 1px solid #c9c9c9; display: flex; align-items: center; justify-content: center; }
.close svg { width: 10px; height: 10px; }
.resources { display: flex; margin-top: -1px; padding-left: 26px; }
.resources > div:nth-child(1) { width: 141px; }
.resources > div:nth-child(2) { width: 220px; }
.resources > div:nth-child(3) { width: 213px; }
.resources .opt { height: 20px; line-height: 20px; }
.notes { padding: 6px 0 0 26px; gap: 12px; }
.notes .area { width: 330px; height: 67px; margin-top: 2px; }
.notes .lbl { font-size: 13px; }
.rule { height: 1px; margin: 14px 0 0; background: #ddd; }

/* actions */
.actions { height: 128px; padding: 10px 0 0 26px; }
.when { width: 93px; }
.plain { display: block; }
.when .in { height: 24px; line-height: 22px; }
.when .date { margin-top: 1px; }
.when .time { margin-top: 3px; }
.code { display: block; margin: 10px 0 0 3px; color: #808080; }
.code em { padding-left: 3px; }
.what { width: 422px; }
.what-h { padding-left: 2px; height: 17px; }
.what-h svg { width: 17px; height: 16px; margin: -2px 4px 0 119px; }
.copy { color: #0b7fc3; }
.what .area { height: 90px; }
.acts { margin: 51px 0 0 5px; width: 170px; color: #808080; }
.acts a { width: 55px; display: flex; flex-direction: column; align-items: center; }
.acts svg { width: 40px; height: 40px; margin-bottom: 2px; }

/* log table */
.log { width: 673px; height: 154px; margin-left: 26px; border: 1px solid #000; border-bottom: 0; display: flex; overflow: hidden; }
.grid { width: 653px; flex: none; background: #000; }
.tr { height: 18px; display: grid; grid-template-columns: 10px 71px 41px 531px; line-height: 17px; color: #5a5a5a; background: #fff; }
.tr > * { overflow: hidden; border-bottom: 1px solid #bbb; border-right: 1px solid #bbb; padding-left: 2px; }
.tr > i { background: #efefef; border-color: #000; padding: 0; display: flex; justify-content: flex-end; align-items: center; }
.tr > span:nth-child(4) { border-right: 0; }
.tr i svg { width: 5px; height: 8px; }
.tr.th { height: 24px; line-height: 24px; color: #fff; background: #444; font-weight: bold; font-size: 13.4px; letter-spacing: 0; }
.th > * { border-color: #000; text-align: center; }
.alt { background: #d5e3e8; }
.tr.sel { background: #0078d7; color: #fff; height: 22px; }
.sel > span { border-bottom: 0; }
.vbar { width: 17px; height: 152px; flex: none; display: flex; flex-direction: column; justify-content: space-between; background: #f6f6f6; }
.vbar b { height: 17px; flex: none; background: #f0f0f0; border: 1px solid #fff; border-right-color: #777; border-bottom-color: #777; display: flex; align-items: center; justify-content: center; }
.vbar .thumb { height: 86px; margin-bottom: 7px; }
.vbar svg { width: 7px; height: 4px; }

/* attachments */
.docs { height: 129px; padding: 14px 0 0 26px; }
.doclist { width: 286px; }
.dochead { height: 26px; line-height: 18px; padding: 1px 0 0 6px; background: #3a3a3a; border-bottom: 1px solid #bbb; color: #fff; display: flex; align-items: center; }
.dochead b { width: 209px; font-size: 13.3px; letter-spacing: 0; }
.dochead span { width: 44px; letter-spacing: -.2px; }
.dochead em { color: #fff25a; font-weight: bold; }
.docbody { height: 74px; margin-left: 1px; border: 1px solid #bbb; background: #d1edf8; display: flex; justify-content: flex-end; }
.docbody .bar { margin: 0; background: #f0f0f0; width: 17px; padding: 6px 0 5px; }
.attach { width: 97px; height: 26px; line-height: 25px; margin-left: 10px; border-right: 2px solid #777; border-bottom: 2px solid #777; background: #218b3f; color: #fff; font-weight: bold; text-align: center; font-size: 13.4px; letter-spacing: 0; padding-right: 3px; }
.preview { width: 184px; height: 103px; margin: -2px 0 0 13px; border: 1px solid #c8c8c8; }

/* closing row */
.closing { padding: 0 0 0 25px; }
.closed { width: 290px; }
.closed .tab { width: 162px; padding-left: 12px; }
.closedbox { width: 289px; height: 66px; margin: 1px 0 0 1px; padding: 5px 0 0 8px; border: 1px solid #c9c9c9; }
.closedbox .row { gap: 27px; margin-bottom: 5px; }
.closedbox > .in { width: 270px; }
.links { margin: 16px 0 0 54px; display: flex; color: #808080; }
.links a { width: 87px; display: flex; flex-direction: column; align-items: center; }
.links svg { width: 55px; height: 55px; margin-bottom: 3px; }

/* taskbar */
.taskbar { height: 7px; border-top: 4px solid #000; display: flex; flex: none; }
.taskbar i:nth-child(1) { width: 623px; background: #333; }
.taskbar i:nth-child(2) { width: 152px; background: #07718f; }
.taskbar i:nth-child(3) { flex: 1; background: #0a8ab5; }

/* marker frames and notes drawn over the form */
.frame { position: absolute; border: 8px solid #ed1c24; }
.green-f { border-color: #22b14c; }
.orange-f { border-color: #ff7f27; }
.blue-f { border-color: #00a2e8; }
.f1 { left: -2px; top: 55px; width: 859px; height: 288px; }
.f2 { left: 5px; top: 352px; width: 374px; height: 322px; }
.f3 { left: 372px; top: 344px; width: 485px; height: 122px; }
.f4 { left: 352px; top: 192px; width: 118px; height: 142px; }
.f5 { left: 382px; top: 469px; width: 480px; height: 207px; }
.f6 { left: 864px; top: 1px; width: 714px; height: 261px; }
.f7 { left: 866px; top: 261px; width: 708px; height: 284px; }
.f8 { left: 875px; top: 545px; width: 685px; height: 129px; border-top-width: 7px; box-shadow: inset -1px 0 0 #22b14c; }
.note { position: absolute; font: bold 18.3px/22px Lato, sans-serif; letter-spacing: 0; color: #ed1c24; }
.n1 { left: 319px; top: 169px; color: #22b14c; }
.n2 { left: 476px; top: 303px; }
.n3 { left: 523px; top: 586px; color: #ff7f27; }
.n4 { left: 989px; top: 218px; }
.n5 { left: 1153px; top: 347px; color: #00a2e8; }
.activate { position: absolute; left: 1254px; top: 738px; color: rgba(130,130,130,.6); letter-spacing: 0; display: flex; flex-direction: column; font-family: "Open Sans", "Noto Sans", sans-serif; }
.activate b { font-weight: 300; font-size: 20.3px; line-height: 24px; }
.activate span { font-size: 14.1px; line-height: 20px; }
```
